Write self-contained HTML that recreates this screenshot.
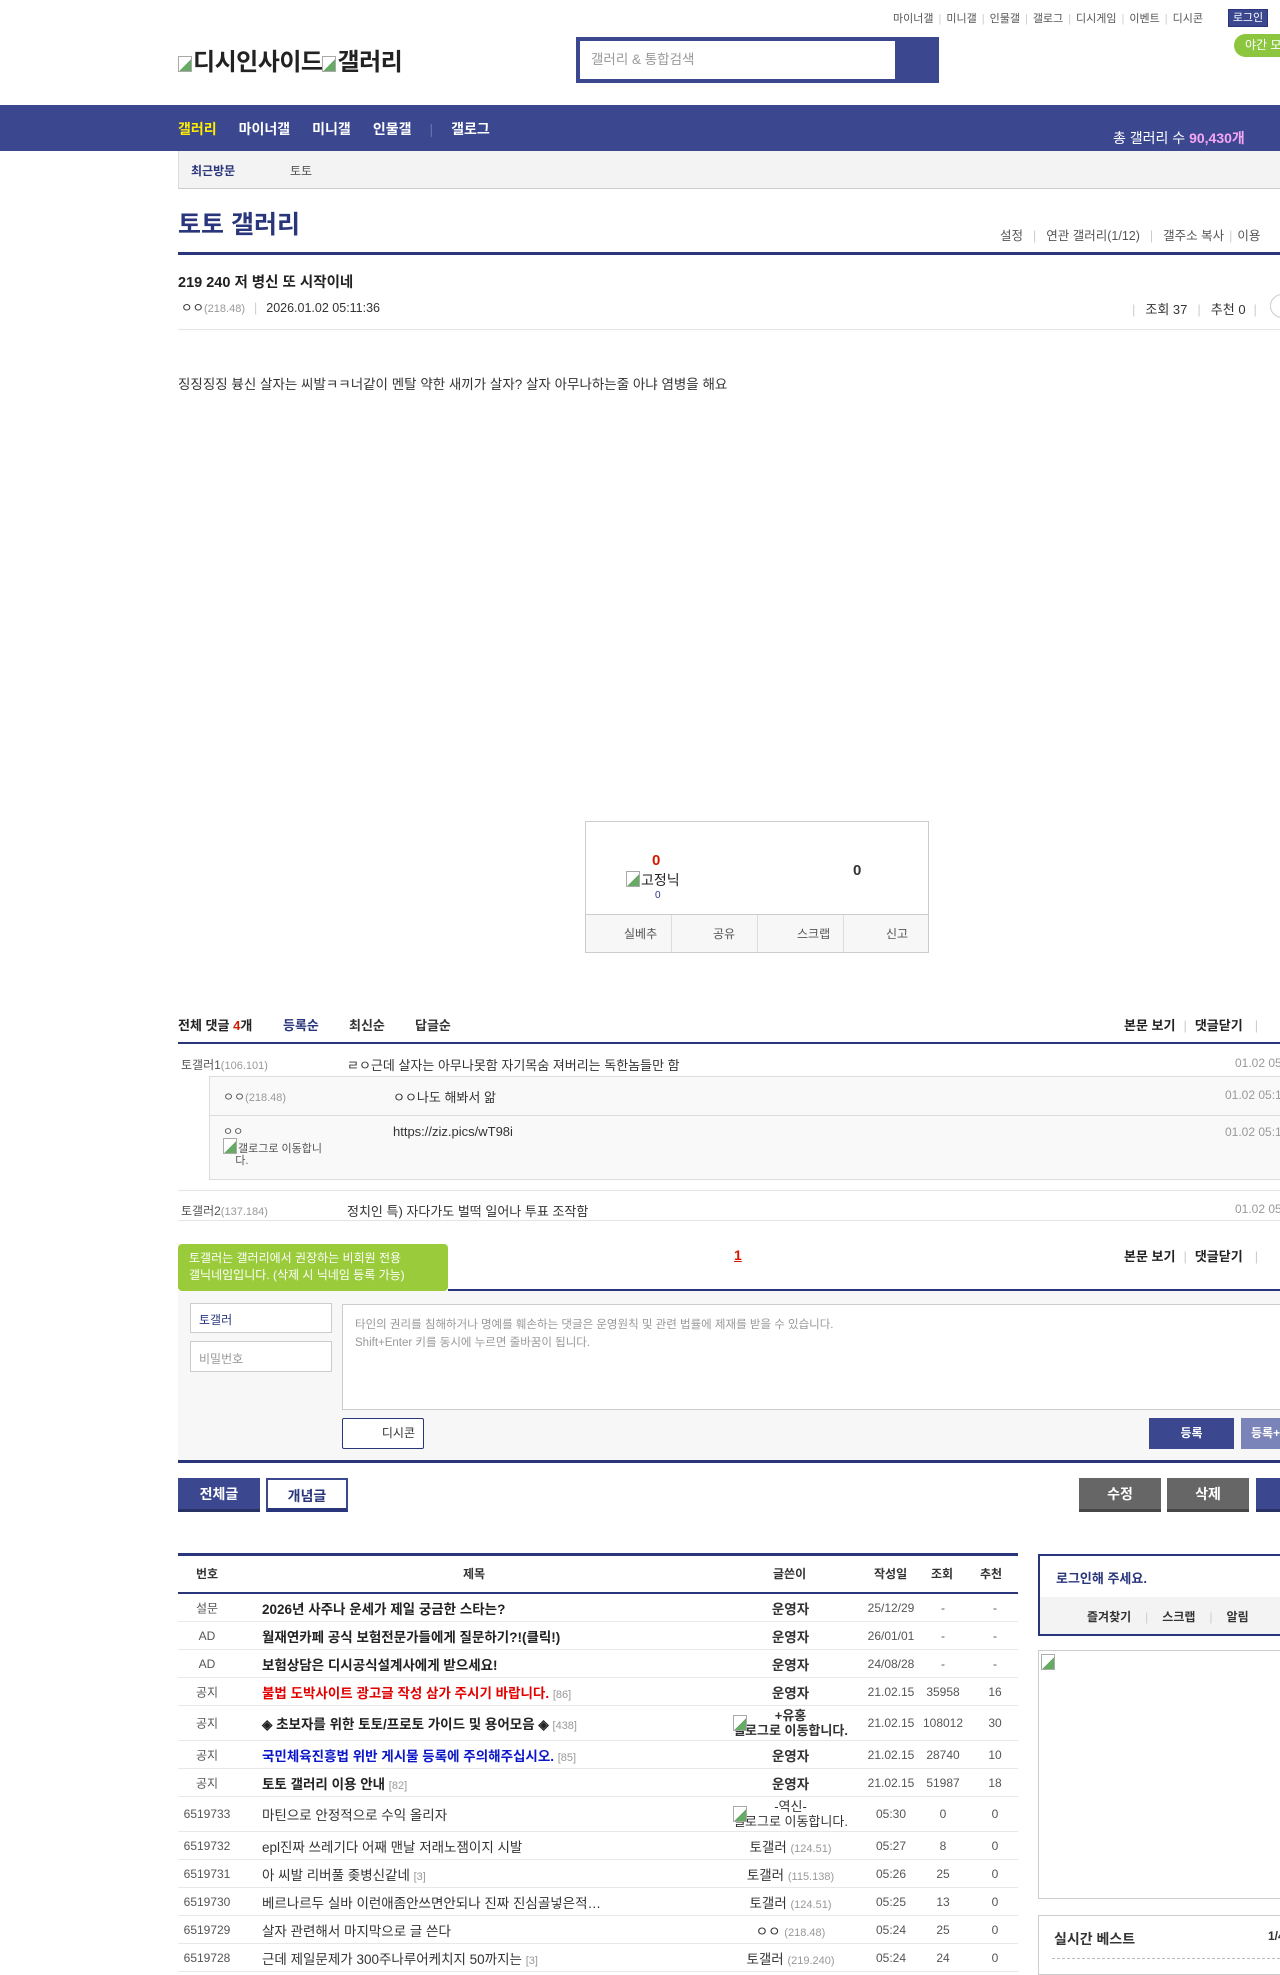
<!DOCTYPE html>
<html><head><meta charset="utf-8">
<style>
*{margin:0;padding:0;box-sizing:border-box}
body{width:1280px;height:1953px;overflow:hidden;position:relative;background:#fff;font-family:"Liberation Sans","Noto Sans CJK KR",sans-serif;color:#333;font-size:14px}
.a{position:absolute;white-space:nowrap}
.w{position:absolute;left:0;width:1280px;height:0}
.sep{color:#ccc;margin:0 5px}
.bi{display:inline-block;width:14px;height:16px;border:1px solid #aaa;background:linear-gradient(135deg,#fff 55%,#6a6 55%);vertical-align:-2px;margin-right:1px}
.hl{position:absolute;height:1px;background:#e5e5e5}
.bl{position:absolute;background:#29367c}
.tr{position:absolute;left:178px;width:840px;border-bottom:1px solid #e8e8e8;font-size:13.5px}
.tr span{position:absolute;top:50%;transform:translateY(-50%);white-space:nowrap}
.c1{left:0;width:58px;text-align:center;font-size:12px;color:#555}
.c2{left:84px}
.c3{left:540px;width:145px;text-align:center}
.c4{left:688px;width:50px;text-align:center;font-size:12px;color:#555}
.c5{left:740px;width:50px;text-align:center;font-size:12px;color:#555}
.c6{left:792px;width:50px;text-align:center;font-size:12px;color:#555}
.ip{color:#999;font-size:11px}
.btn{position:absolute;height:34px;line-height:32px;text-align:center;font-size:14px;font-weight:bold;color:#fff;border-bottom:3px solid rgba(0,0,0,.3)}
</style></head><body>

<!-- top links -->
<div class="a" style="left:893px;top:10px;font-size:11px;color:#555">마이너갤<span class="sep">|</span>미니갤<span class="sep">|</span>인물갤<span class="sep">|</span>갤로그<span class="sep">|</span>디시게임<span class="sep">|</span>이벤트<span class="sep">|</span>디시콘</div>
<div class="a" style="left:1228px;top:9px;width:40px;height:18px;background:#3b4890;border:1px solid #29367c;color:#fff;font-size:11px;text-align:center;line-height:16px">로그인</div>
<div class="a" style="left:1234px;top:34px;width:60px;height:23px;background:#8cc63f;border-radius:12px;color:#fff;font-size:12px;line-height:23px;padding-left:11px">야간 모드</div>

<!-- logo -->
<div class="a" style="left:178px;top:42px;font-size:24px;font-weight:bold;color:#222;letter-spacing:-0.5px"><span class="bi"></span>디시인사이드<span class="bi"></span>갤러리</div>

<!-- search -->
<div class="a" style="left:576px;top:37px;width:363px;height:46px;background:#3b4890"></div>
<div class="a" style="left:580px;top:41px;width:315px;height:38px;background:#fff;color:#999;font-size:13.5px;line-height:38px;padding-left:11px">갤러리 &amp; 통합검색</div>

<!-- nav -->
<div class="a" style="left:0;top:105px;width:1280px;height:46px;background:#3b4890"></div>
<div class="a" style="left:178px;top:119px;font-size:14px;font-weight:bold;color:#fff"><span style="color:#ffed00">갤러리</span><span style="margin-left:22px">마이너갤</span><span style="margin-left:22px">미니갤</span><span style="margin-left:22px">인물갤</span><span style="margin:0 18px;color:#6a75b0;font-weight:normal">|</span>갤로그</div>
<div class="a" style="left:1113px;top:128px;font-size:14px;color:#fff">총 갤러리 수 <b style="color:#f6a6f4">90,430개</b></div>

<!-- recent -->
<div class="a" style="left:178px;top:151px;width:1102px;height:38px;background:#f3f3f3;border-left:1px solid #ddd;border-bottom:1px solid #ccc"></div>
<div class="a" style="left:191px;top:162px;font-size:12px;font-weight:bold;color:#29367c">최근방문</div>
<div class="a" style="left:290px;top:162px;font-size:12px;color:#555">토토</div>

<!-- title -->
<div class="a" style="left:178px;top:205px;font-size:25px;font-weight:bold;color:#29367c">토토 갤러리</div>
<div class="a" style="left:1000px;top:225px;font-size:12.5px;color:#555">설정<span class="sep" style="margin:0 10px">|</span>연관 갤러리(1/12)<span class="sep" style="margin:0 10px">|</span>갤주소 복사<span class="sep">|</span>이용</div>
<div class="bl" style="left:178px;top:252px;width:1102px;height:3px"></div>

<!-- post -->
<div class="a" style="left:178px;top:271px;font-size:14.5px;font-weight:bold;color:#222">219 240 저 병신 또 시작이네</div>
<div class="a" style="left:181px;top:297px;font-size:12.5px;color:#333">ㅇㅇ<span class="ip">(218.48)</span><span class="sep" style="margin:0 9px">|</span>2026.01.02 05:11:36</div>
<div class="a" style="left:1132px;top:299px;font-size:13px;color:#333"><span class="sep" style="margin:0 10px 0 0">|</span>조회 37<span class="sep" style="margin:0 10px">|</span>추천 0<span class="sep" style="margin:0 8px">|</span></div>
<div class="a" style="left:1270px;top:294px;width:24px;height:24px;border:1px solid #ccc;border-radius:50%"></div>
<div class="hl" style="left:178px;top:329px;width:1102px"></div>
<div class="a" style="left:178px;top:373px;font-size:13.5px;color:#333">징징징징 븅신 살자는 씨발ㅋㅋ너같이 멘탈 약한 새끼가 살자? 살자 아무나하는줄 아냐 염병을 해요</div>

<div class="w" style="top:6px">
<!-- recommend box -->
<div class="a" style="left:585px;top:815px;width:344px;height:132px;border:1px solid #ccc"></div>
<div class="a" style="left:586px;top:908px;width:342px;height:38px;background:#f7f7f7;border-top:1px solid #ccc"></div>
<div class="a" style="left:671px;top:909px;width:1px;height:37px;background:#ddd"></div>
<div class="a" style="left:757px;top:909px;width:1px;height:37px;background:#ddd"></div>
<div class="a" style="left:843px;top:909px;width:1px;height:37px;background:#ddd"></div>
<div class="a" style="left:624px;top:919px;font-size:12px;color:#555">실베추</div>
<div class="a" style="left:713px;top:919px;font-size:12px;color:#555">공유</div>
<div class="a" style="left:797px;top:919px;font-size:12px;color:#555">스크랩</div>
<div class="a" style="left:886px;top:919px;font-size:12px;color:#555">신고</div>
<div class="a" style="left:652px;top:846px;font-size:15px;font-weight:bold;color:#d31900">0</div>
<div class="a" style="left:626px;top:864px;font-size:14px;color:#222"><span class="bi"></span>고정닉</div>
<div class="a" style="left:655px;top:884px;font-size:10px;color:#29367c">0</div>
<div class="a" style="left:853px;top:856px;font-size:15px;font-weight:bold;color:#333">0</div>
</div>

<div class="w" style="top:7px">
<!-- comments header -->
<div class="a" style="left:178px;top:1008px;font-size:13px;font-weight:bold;color:#222">전체 댓글 <span style="color:#d31900">4</span>개</div>
<div class="a" style="left:283px;top:1008px;font-size:13px;font-weight:bold;color:#29367c">등록순</div>
<div class="a" style="left:349px;top:1008px;font-size:13px;font-weight:bold;color:#333">최신순</div>
<div class="a" style="left:415px;top:1008px;font-size:13px;font-weight:bold;color:#333">답글순</div>
<div class="a" style="left:1124px;top:1008px;font-size:13px;font-weight:bold;color:#222">본문 보기<span class="sep" style="margin:0 8px;font-weight:normal">|</span>댓글닫기<span class="sep" style="margin:0 12px;font-weight:normal">|</span></div>
<div class="bl" style="left:178px;top:1035px;width:1102px;height:2px"></div>

<div class="a" style="left:181px;top:1049px;font-size:12px;color:#555">토갤러1<span class="ip">(106.101)</span></div>
<div class="a" style="left:347px;top:1048px;font-size:13px;color:#333">ㄹㅇ근데 살자는 아무나못함 자기목숨 져버리는 독한놈들만 함</div>
<div class="a" style="left:1235px;top:1049px;font-size:12px;color:#999">01.02 05:1</div>
<div class="a" style="left:209px;top:1069px;width:1071px;height:104px;background:#f9f9f9;border:1px solid #ddd;border-right:none"></div>
<div class="hl" style="left:210px;top:1108px;width:1070px;background:#ddd"></div>
<div class="a" style="left:223px;top:1081px;font-size:12px;color:#555">ㅇㅇ<span class="ip">(218.48)</span></div>
<div class="a" style="left:393px;top:1080px;font-size:13px;color:#333">ㅇㅇ나도 해봐서 앎</div>
<div class="a" style="left:1225px;top:1081px;font-size:12px;color:#999">01.02 05:1</div>
<div class="a" style="left:223px;top:1119px;font-size:11px;color:#555;line-height:12px;white-space:normal;width:130px">ㅇㅇ<br><span class="bi"></span>갤로그로 이동합니<br>&nbsp;&nbsp;&nbsp;&nbsp;다.</div>
<div class="a" style="left:393px;top:1117px;font-size:13px;color:#333">https://ziz.pics/wT98i</div>
<div class="a" style="left:1225px;top:1118px;font-size:12px;color:#999">01.02 05:1</div>
<div class="hl" style="left:178px;top:1183px;width:1102px"></div>
<div class="a" style="left:181px;top:1195px;font-size:12px;color:#555">토갤러2<span class="ip">(137.184)</span></div>
<div class="a" style="left:347px;top:1194px;font-size:13px;color:#333">정치인 특) 자다가도 벌떡 일어나 투표 조작함</div>
<div class="a" style="left:1235px;top:1195px;font-size:12px;color:#999">01.02 05:1</div>
<div class="hl" style="left:178px;top:1213px;width:1102px"></div>
</div>

<div class="w" style="top:8px">
<div class="a" style="left:734px;top:1239px;font-size:14px;font-weight:bold;color:#d31900;text-decoration:underline">1</div>
<div class="a" style="left:1124px;top:1238px;font-size:13px;font-weight:bold;color:#222">본문 보기<span class="sep" style="margin:0 8px;font-weight:normal">|</span>댓글닫기<span class="sep" style="margin:0 12px;font-weight:normal">|</span></div>
<div class="a" style="left:178px;top:1236px;width:270px;height:47px;background:#9acb3b;border-radius:4px;color:#fff;font-size:12px;line-height:17px;padding:6px 10px 0 11px;white-space:normal">토갤러는 갤러리에서 권장하는 비회원 전용<br>갤닉네임입니다. (삭제 시 닉네임 등록 가능)</div>
<div class="a" style="left:211px;top:1283px;width:0;height:0;border-left:5px solid transparent;border-right:5px solid transparent;border-top:7px solid #9acb3b"></div>
<div class="bl" style="left:448px;top:1281px;width:832px;height:2px"></div>
<div class="a" style="left:178px;top:1283px;width:1102px;height:170px;background:#f7f7f7"></div>
<div class="a" style="left:190px;top:1295px;width:142px;height:30px;background:#fff;border:1px solid #ccc;font-size:12px;color:#29367c;padding:7px 8px">토갤러</div>
<div class="a" style="left:190px;top:1333px;width:142px;height:31px;background:#fff;border:1px solid #ccc;font-size:12px;color:#999;padding:8px 8px">비밀번호</div>
<div class="a" style="left:342px;top:1296px;width:940px;height:106px;background:#fff;border:1px solid #ccc;font-size:11.5px;color:#999;padding:11px 12px;line-height:18px">타인의 권리를 침해하거나 명예를 훼손하는 댓글은 운영원칙 및 관련 법률에 제재를 받을 수 있습니다.<br>Shift+Enter 키를 동시에 누르면 줄바꿈이 됩니다.</div>
<div class="a" style="left:342px;top:1410px;width:82px;height:31px;background:#fff;border:1px solid #29367c;border-radius:2px;font-size:12px;color:#333;line-height:29px;text-align:right;padding-right:8px">디시콘</div>
<div class="a" style="left:1149px;top:1410px;width:85px;height:31px;background:#3b4890;color:#fff;font-size:12px;font-weight:bold;line-height:31px;text-align:center">등록</div>
<div class="a" style="left:1241px;top:1410px;width:60px;height:31px;background:#7a84b8;color:#fff;font-size:12px;font-weight:bold;line-height:31px;padding-left:10px">등록+</div>
<div class="bl" style="left:178px;top:1452px;width:1102px;height:3px"></div>
</div>

<div class="w" style="top:9px">
<!-- buttons -->
<div class="btn" style="left:178px;top:1469px;width:82px;background:#3b4890">전체글</div>
<div class="btn" style="left:266px;top:1469px;width:82px;background:#fff;color:#29367c;border:2px solid #3b4890;border-bottom:4px solid #29367c">개념글</div>
<div class="btn" style="left:1079px;top:1469px;width:82px;background:#666">수정</div>
<div class="btn" style="left:1167px;top:1469px;width:82px;background:#666">삭제</div>
<div class="btn" style="left:1256px;top:1469px;width:82px;background:#3b4890">글</div>
</div>

<div class="w" style="top:10px">
<!-- list -->
<div class="bl" style="left:178px;top:1543px;width:840px;height:3px"></div>
<div class="a" style="left:178px;top:1555px;width:840px;font-size:12px;font-weight:bold;color:#333;height:16px">
<span class="a" style="left:18px">번호</span><span class="a" style="left:285px">제목</span><span class="a" style="left:595px">글쓴이</span><span class="a" style="left:696px">작성일</span><span class="a" style="left:753px">조회</span><span class="a" style="left:802px">추천</span></div>
<div class="bl" style="left:178px;top:1582px;width:840px;height:2px"></div>

<div class="tr" style="top:1584px;height:28px"><span class="c1">설문</span><span class="c2" style="font-weight:bold;color:#222">2026년 사주나 운세가 제일 궁금한 스타는?</span><span class="c3" style="font-weight:bold">운영자</span><span class="c4">25/12/29</span><span class="c5">-</span><span class="c6">-</span></div>
<div class="tr" style="top:1612px;height:28px"><span class="c1">AD</span><span class="c2" style="font-weight:bold;color:#222">월재연카페 공식 보험전문가들에게 질문하기?!(클릭!)</span><span class="c3" style="font-weight:bold">운영자</span><span class="c4">26/01/01</span><span class="c5">-</span><span class="c6">-</span></div>
<div class="tr" style="top:1640px;height:28px"><span class="c1">AD</span><span class="c2" style="font-weight:bold;color:#222">보험상담은 디시공식설계사에게 받으세요!</span><span class="c3" style="font-weight:bold">운영자</span><span class="c4">24/08/28</span><span class="c5">-</span><span class="c6">-</span></div>
<div class="tr" style="top:1668px;height:28px"><span class="c1">공지</span><span class="c2" style="font-weight:bold;color:#e30000">불법 도박사이트 광고글 작성 삼가 주시기 바랍니다. <i class="ip" style="font-style:normal;font-weight:normal">[86]</i></span><span class="c3" style="font-weight:bold">운영자</span><span class="c4">21.02.15</span><span class="c5">35958</span><span class="c6">16</span></div>
<div class="tr" style="top:1696px;height:35px"><span class="c1">공지</span><span class="c2" style="font-weight:bold;color:#222">◈ 초보자를 위한 토토/프로토 가이드 및 용어모음 ◈ <i class="ip" style="font-style:normal;font-weight:normal">[438]</i></span><span class="c3" style="font-weight:bold;line-height:15px;font-size:13px">+유홍<br><span class="bi"></span>갤로그로 이동합니다.</span><span class="c4">21.02.15</span><span class="c5">108012</span><span class="c6">30</span></div>
<div class="tr" style="top:1731px;height:28px"><span class="c1">공지</span><span class="c2" style="font-weight:bold;color:#0a16c8">국민체육진흥법 위반 게시물 등록에 주의해주십시오. <i class="ip" style="font-style:normal;font-weight:normal">[85]</i></span><span class="c3" style="font-weight:bold">운영자</span><span class="c4">21.02.15</span><span class="c5">28740</span><span class="c6">10</span></div>
<div class="tr" style="top:1759px;height:28px"><span class="c1">공지</span><span class="c2" style="font-weight:bold;color:#222">토토 갤러리 이용 안내 <i class="ip" style="font-style:normal;font-weight:normal">[82]</i></span><span class="c3" style="font-weight:bold">운영자</span><span class="c4">21.02.15</span><span class="c5">51987</span><span class="c6">18</span></div>
<div class="tr" style="top:1787px;height:35px"><span class="c1">6519733</span><span class="c2">마틴으로 안정적으로 수익 올리자</span><span class="c3" style="line-height:15px;font-size:13px">-역신-<br><span class="bi"></span>갤로그로 이동합니다.</span><span class="c4">05:30</span><span class="c5">0</span><span class="c6">0</span></div>
<div class="tr" style="top:1822px;height:28px"><span class="c1">6519732</span><span class="c2">epl진짜 쓰레기다 어째 맨날 저래노잼이지 시발</span><span class="c3">토갤러 <i class="ip" style="font-style:normal">(124.51)</i></span><span class="c4">05:27</span><span class="c5">8</span><span class="c6">0</span></div>
<div class="tr" style="top:1850px;height:28px"><span class="c1">6519731</span><span class="c2">아 씨발 리버풀 좆병신같네 <i class="ip" style="font-style:normal">[3]</i></span><span class="c3">토갤러 <i class="ip" style="font-style:normal">(115.138)</i></span><span class="c4">05:26</span><span class="c5">25</span><span class="c6">0</span></div>
<div class="tr" style="top:1878px;height:28px"><span class="c1">6519730</span><span class="c2">베르나르두 실바 이런애좀안쓰면안되나 진짜 진심골넣은적…</span><span class="c3">토갤러 <i class="ip" style="font-style:normal">(124.51)</i></span><span class="c4">05:25</span><span class="c5">13</span><span class="c6">0</span></div>
<div class="tr" style="top:1906px;height:28px"><span class="c1">6519729</span><span class="c2">살자 관련해서 마지막으로 글 쓴다</span><span class="c3">ㅇㅇ <i class="ip" style="font-style:normal">(218.48)</i></span><span class="c4">05:24</span><span class="c5">25</span><span class="c6">0</span></div>
<div class="tr" style="top:1934px;height:28px"><span class="c1">6519728</span><span class="c2">근데 제일문제가 300주나루어케치지 50까지는 <i class="ip" style="font-style:normal">[3]</i></span><span class="c3">토갤러 <i class="ip" style="font-style:normal">(219.240)</i></span><span class="c4">05:24</span><span class="c5">24</span><span class="c6">0</span></div>

<!-- sidebar -->
<div class="a" style="left:1038px;top:1544px;width:260px;height:82px;border:2px solid #29367c;border-right:none"></div>
<div class="a" style="left:1056px;top:1558px;font-size:13px;font-weight:bold;color:#29367c">로그인해 주세요.</div>
<div class="a" style="left:1040px;top:1587px;width:240px;height:37px;background:#f3f3f3"></div>
<div class="a" style="left:1087px;top:1598px;font-size:12px;font-weight:bold;color:#333">즐겨찾기<span class="sep" style="margin:0 14px;font-weight:normal">|</span>스크랩<span class="sep" style="margin:0 14px;font-weight:normal">|</span>알림</div>
<div class="a" style="left:1038px;top:1640px;width:250px;height:249px;border:1px solid #ccc;border-right:none"><span class="bi" style="margin:3px 0 0 2px"></span></div>
<div class="a" style="left:1038px;top:1905px;width:250px;height:60px;border:1px solid #ccc;border-right:none"></div>
<div class="a" style="left:1054px;top:1919px;font-size:14px;font-weight:bold;color:#333">실시간 베스트</div>
<div class="a" style="left:1268px;top:1919px;font-size:12px;font-weight:bold;color:#333">1/4</div>
<div class="a" style="left:1052px;top:1948px;width:228px;border-top:1px dashed #bbb"></div>
</div>
</body></html>
